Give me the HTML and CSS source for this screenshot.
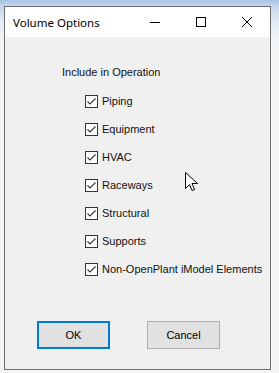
FILE: index.html
```html
<!doctype html>
<html lang="en">
  <head>
    <meta charset="UTF-8" />
    <title>Volume Options</title>
    <link rel="stylesheet" href="styles.css">
  </head>
  <body>
    <div class="desktop">
      <div class="window">
        <div class="titlebar">
          <span class="title">Volume Options</span>
          <div class="controls">
            <span class="ctl">
              <svg width="10" height="10" viewBox="0 0 10 10"><path d="M0 5.5h10" stroke="#000" stroke-width="1"/></svg>
            </span>
            <span class="ctl">
              <svg width="10" height="10" viewBox="0 0 10 10"><rect x="0.5" y="0.5" width="9" height="9" fill="none" stroke="#000" stroke-width="1"/></svg>
            </span>
            <span class="ctl">
              <svg width="10" height="10" viewBox="0 0 10 10"><path d="M0 0L10 10M10 0L0 10" stroke="#000" stroke-width="1"/></svg>
            </span>
          </div>
        </div>
        <div class="content">
          <div class="heading">Include in Operation</div>
          <ul class="options">
            <li><svg class="check" width="13" height="13" viewBox="0 0 13 13"><rect x="0.5" y="0.5" width="12" height="12" fill="#fff" stroke="#333"/><path d="M2.5 6.5L5 9L10.5 3.5" fill="none" stroke="#333" stroke-width="1.1"/></svg>Piping</li>
            <li><svg class="check" width="13" height="13" viewBox="0 0 13 13"><rect x="0.5" y="0.5" width="12" height="12" fill="#fff" stroke="#333"/><path d="M2.5 6.5L5 9L10.5 3.5" fill="none" stroke="#333" stroke-width="1.1"/></svg>Equipment</li>
            <li><svg class="check" width="13" height="13" viewBox="0 0 13 13"><rect x="0.5" y="0.5" width="12" height="12" fill="#fff" stroke="#333"/><path d="M2.5 6.5L5 9L10.5 3.5" fill="none" stroke="#333" stroke-width="1.1"/></svg>HVAC</li>
            <li><svg class="check" width="13" height="13" viewBox="0 0 13 13"><rect x="0.5" y="0.5" width="12" height="12" fill="#fff" stroke="#333"/><path d="M2.5 6.5L5 9L10.5 3.5" fill="none" stroke="#333" stroke-width="1.1"/></svg>Raceways</li>
            <li><svg class="check" width="13" height="13" viewBox="0 0 13 13"><rect x="0.5" y="0.5" width="12" height="12" fill="#fff" stroke="#333"/><path d="M2.5 6.5L5 9L10.5 3.5" fill="none" stroke="#333" stroke-width="1.1"/></svg>Structural</li>
            <li><svg class="check" width="13" height="13" viewBox="0 0 13 13"><rect x="0.5" y="0.5" width="12" height="12" fill="#fff" stroke="#333"/><path d="M2.5 6.5L5 9L10.5 3.5" fill="none" stroke="#333" stroke-width="1.1"/></svg>Supports</li>
            <li><svg class="check" width="13" height="13" viewBox="0 0 13 13"><rect x="0.5" y="0.5" width="12" height="12" fill="#fff" stroke="#333"/><path d="M2.5 6.5L5 9L10.5 3.5" fill="none" stroke="#333" stroke-width="1.1"/></svg>Non-OpenPlant iModel Elements</li>
          </ul>
          <div class="buttons">
            <button class="btn default">OK</button>
            <button class="btn">Cancel</button>
          </div>
        </div>
      </div>
      <svg class="cursor" width="13" height="20" viewBox="0 0 13 20">
        <path d="M0.5 0.5V16.5L4.5 12.5L7 18.5L9.5 17.5L7 11.5H12.5Z" fill="#fff" stroke="#000" stroke-width="1" stroke-linejoin="miter"/>
      </svg>
    </div>
  </body>
</html>
```

FILE: styles.css
```css
body {
  margin: 0;
  width: 279px;
  height: 373px;
  overflow: hidden;
  background: #f4f6f8;
}

.desktop {
  position: relative;
  height: 373px;
  padding: 6px 0 0 4px;
  box-sizing: border-box;
  background: linear-gradient(#a9c4e4 0, #c3d6ec 6px, #e3ebf4 22px, #f3f5f7 40px, #f3f5f7 100%);
}

.window {
  width: 267px;
  height: 364px;
  box-sizing: border-box;
  border: 1px solid #6f6f6f;
  background: #f0f0f0;
  display: flex;
  flex-direction: column;
}

.titlebar {
  height: 30px;
  background: #fff;
  display: flex;
  align-items: center;
  justify-content: space-between;
  padding-left: 8px;
}

.title {
  font-family: "Segoe UI", "Noto Sans", "Open Sans", sans-serif;
  font-size: 11.5px;
  color: #000;
  padding-top: 1px;
}

.controls {
  display: flex;
}

.ctl {
  width: 46px;
  display: flex;
  justify-content: center;
}

.ctl svg {
  display: block;
}

.content {
  flex: 1;
  font-family: "Liberation Sans", Arial, sans-serif;
  font-size: 11px;
  color: #111;
  padding-left: 57px;
}

.heading {
  margin-top: 28px;
  height: 14px;
  line-height: 14px;
}

.options {
  list-style: none;
  margin: 8px 0 0 23px;
  padding: 0;
}

.options li {
  height: 28px;
  display: flex;
  align-items: center;
}

.check {
  display: block;
  flex: none;
  margin-right: 4px;
}

.buttons {
  display: flex;
  gap: 37px;
  margin-top: 38px;
  margin-left: -25px;
}

.btn {
  width: 73px;
  height: 28px;
  box-sizing: border-box;
  border: 1px solid #adadad;
  background: #e1e1e1;
  font-family: "Liberation Sans", Arial, sans-serif;
  font-size: 11px;
  color: #000;
  padding: 0;
}

.btn.default {
  border: 2px solid #0078d7;
}

.cursor {
  position: absolute;
  left: 185px;
  top: 172px;
}
```
